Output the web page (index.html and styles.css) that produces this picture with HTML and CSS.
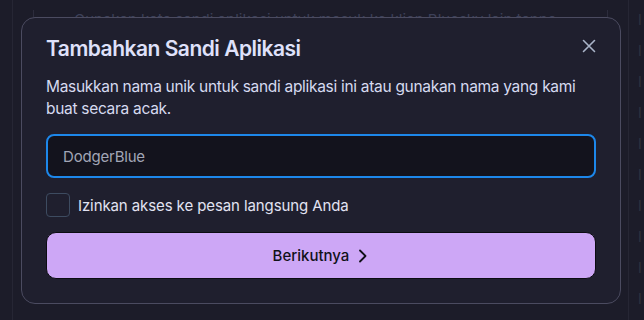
FILE: index.html
```html
<!DOCTYPE html>
<html lang="id">

<head>
  <meta charset="UTF-8">
  <meta name="viewport" content="width=device-width, initial-scale=1.0">
  <title>Sandi Aplikasi</title>
  <link rel="stylesheet" href="styles.css">
</head>

<body>
  <div class="page">
    <div class="side-left"></div>
    <div class="main">
      <div class="back-card">
        <p>Gunakan kata sandi aplikasi untuk masuk ke klien Bluesky lain tanpa</p>
      </div>
    </div>
    <div class="side-right">
      <span>I</span>
      <span>I</span>
      <span>I</span>
      <span>I</span>
      <span>I</span>
      <span>I</span>
      <span>I</span>
      <span>I</span>
      <span>I</span>
      <span>I</span>
    </div>
  </div>

  <div class="modal">
    <div class="modal-header">
      <h2>Tambahkan Sandi Aplikasi</h2>
      <button class="close" aria-label="Tutup">
        <svg width="14" height="14" viewBox="0 0 14 14" fill="none" stroke="currentColor" stroke-width="1.6" stroke-linecap="round">
          <path d="M1.5 1.5L12.5 12.5M12.5 1.5L1.5 12.5" />
        </svg>
      </button>
    </div>
    <p class="desc">Masukkan nama unik untuk sandi aplikasi ini atau gunakan nama yang kami buat secara acak.</p>
    <input type="text" class="name-input" placeholder="DodgerBlue">
    <label class="check-row">
      <span class="checkbox"></span>
      <span>Izinkan akses ke pesan langsung Anda</span>
    </label>
    <button class="next">
      Berikutnya
      <svg width="12" height="14" viewBox="0 0 12 14" fill="none" stroke="currentColor" stroke-width="1.8" stroke-linecap="round" stroke-linejoin="round">
        <path d="M3 1.5L8.5 7L3 12.5" />
      </svg>
    </button>
  </div>
</body>

</html>
```

FILE: styles.css
```css
* {
  box-sizing: border-box;
}

body {
  margin: 0;
  height: 320px;
  overflow: hidden;
  background-color: #1c1c29;
  font-family: Inter, 'Noto Sans', sans-serif;
  color: #dcdff2;
}

.page {
  display: flex;
  height: 320px;
}

.side-left {
  width: 13px;
  border-right: 1px solid #262634;
}

.main {
  flex: 1;
  padding: 0 20px;
}

.back-card {
  border: 1px solid #2c2c3c;
  border-top: none;
  border-radius: 0 0 14px 14px;
  height: 60px;
  padding: 0 40px;
}

.back-card p {
  margin: 10px 0 0;
  font-size: 15px;
  color: #3c4058;
}

/* faint list behind the modal, right edge */
.side-right {
  width: 16px;
  border-left: 1px solid #262634;
  display: flex;
  flex-direction: column;
  padding: 4px 0 0 9px;
  font-size: 14px;
  line-height: 31px;
  color: #30323f;
  overflow: hidden;
}

.modal {
  position: absolute;
  left: 21px;
  top: 17px;
  width: 600px;
  padding: 17px 24px 24px;
  background-color: #1f1f2e;
  border: 1px solid #4b4b60;
  border-radius: 14px;
}

.modal-header {
  display: flex;
  justify-content: space-between;
  align-items: center;
}

h2 {
  margin: 0;
  font-size: 21px;
  line-height: 28px;
  font-weight: 600;
  letter-spacing: -0.5px;
  color: #dfe1fa;
}

.close {
  background: none;
  border: none;
  padding: 0;
  color: #a9b4c8;
  display: flex;
  margin-top: -6px;
}

.desc {
  margin: 13px 0 14px;
  font-size: 15.5px;
  line-height: 22px;
  letter-spacing: -0.3px;
  color: #d6daf0;
}

.name-input {
  display: block;
  width: 100%;
  height: 44px;
  padding: 0 15px;
  background-color: #13131d;
  border: 2px solid #1d87ea;
  border-radius: 8px;
  font-family: inherit;
  font-size: 15px;
  letter-spacing: -0.2px;
  color: #e0e0f0;
  outline: none;
}

.name-input::placeholder {
  color: #a2a6b6;
}

.check-row {
  display: flex;
  align-items: center;
  gap: 8px;
  margin-top: 15px;
  font-size: 15px;
  letter-spacing: -0.1px;
  color: #e2e3f2;
}

.checkbox {
  width: 24px;
  height: 24px;
  border: 1px solid #3d4b60;
  border-radius: 4px;
}

.next {
  display: flex;
  align-items: center;
  justify-content: center;
  gap: 8px;
  width: 100%;
  height: 47px;
  margin-top: 15px;
  background-color: #cda7f6;
  border: 1px solid #0c0c12;
  border-radius: 10px;
  font-family: inherit;
  font-size: 15px;
  font-weight: 500;
  color: #111118;
  cursor: pointer;
}
```
